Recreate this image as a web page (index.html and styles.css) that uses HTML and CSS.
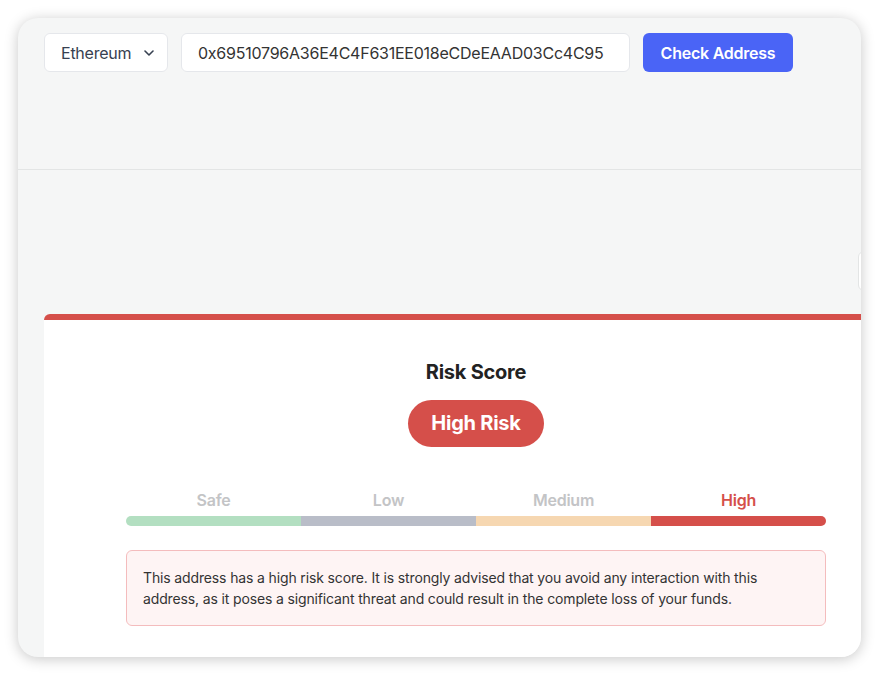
FILE: index.html
```html
<!DOCTYPE html>
<html lang="en">
<head>
    <meta charset="UTF-8">
    <meta name="viewport" content="width=device-width, initial-scale=1.0">
    <title>Address Risk Check</title>
    <link rel="stylesheet" href="styles.css">
</head>
<body>

    <div class="window">
        <div class="search-bar">
            <div class="select">
                <span>Ethereum</span>
                <svg class="chevron" width="10" height="6" viewBox="0 0 10 6">
                    <path d="M1 1l4 4 4-4" fill="none" stroke="#374151" stroke-width="1.6" stroke-linecap="round" stroke-linejoin="round"/>
                </svg>
            </div>
            <input class="address" type="text" value="0x69510796A36E4C4F631EE018eCDeEAAD03Cc4C95">
            <button class="check-btn">Check Address</button>
        </div>

        <div class="side-tab"></div>

        <div class="result">
            <div class="card">
                <h2 class="card-title">Risk Score</h2>
                <span class="pill">High Risk</span>

                <div class="scale">
                    <div class="scale-labels">
                        <span>Safe</span>
                        <span>Low</span>
                        <span>Medium</span>
                        <span class="active">High</span>
                    </div>
                    <div class="scale-bar">
                        <span class="seg safe"></span>
                        <span class="seg low"></span>
                        <span class="seg medium"></span>
                        <span class="seg high"></span>
                    </div>
                </div>

                <div class="alert">
                    This address has a high risk score. It is strongly advised that you avoid any interaction with this
                    address, as it poses a significant threat and could result in the complete loss of your funds.
                </div>
            </div>
        </div>
    </div>

</body>
</html>
```

FILE: styles.css
```css
body {
    margin: 0;
    padding: 0;
    background-color: #fff;
    font-family: Inter, "Noto Sans", sans-serif;
    letter-spacing: -0.015em;
}

/* Janela */
.window {
    position: relative;
    margin: 18px;
    width: 843px;
    height: 639px;
    border-radius: 20px;
    overflow: hidden;
    background-color: #f5f6f6;
    box-shadow: 0 2px 14px rgba(0, 0, 0, 0.22);
}

/* Barra de busca */
.search-bar {
    display: flex;
    align-items: flex-start;
    gap: 13px;
    height: 136px;
    padding: 15px 26px 0;
    border-bottom: 1px solid #e3e5e5;
}

.select {
    display: flex;
    align-items: center;
    justify-content: space-between;
    box-sizing: border-box;
    width: 124px;
    height: 39px;
    padding: 0 13px 0 16px;
    background-color: #fff;
    border: 1px solid #e5e7eb;
    border-radius: 6px;
    font-size: 16px;
    color: #374151;
}

.address {
    box-sizing: border-box;
    width: 449px;
    height: 39px;
    padding: 0 16px;
    background-color: #fff;
    border: 1px solid #e5e7eb;
    border-radius: 6px;
    font-family: inherit;
    font-size: 16px;
    letter-spacing: inherit;
    color: #333;
    outline: none;
}

.check-btn {
    height: 39px;
    width: 150px;
    padding: 0;
    background-color: #4a64f6;
    color: #fff;
    border: none;
    border-radius: 6px;
    font-family: inherit;
    font-size: 16px;
    font-weight: 600;
    letter-spacing: inherit;
    cursor: pointer;
}

.side-tab {
    position: absolute;
    top: 233px;
    left: 840px;
    width: 40px;
    height: 38px;
    background-color: #fff;
    border: 1px solid #e3e5e5;
    border-radius: 6px;
}

/* Resultado */
.result {
    padding: 144px 0 0 26px;
}

.card {
    display: flex;
    flex-direction: column;
    align-items: center;
    width: 864px;
    padding: 38px 82px 40px;
    box-sizing: border-box;
    background-color: #fff;
    border-top: 6px solid #d54f4a;
    border-radius: 6px 6px 0 0;
}

.card-title {
    margin: 0;
    font-size: 20px;
    line-height: 28px;
    font-weight: 700;
    color: #222;
}

.pill {
    margin-top: 14px;
    height: 47px;
    line-height: 47px;
    padding: 0 23px;
    border-radius: 24px;
    background-color: #d54f4a;
    color: #fff;
    font-size: 20px;
    font-weight: 700;
}

.scale {
    width: 100%;
    margin-top: 43px;
}

.scale-labels {
    display: flex;
}

.scale-labels span {
    flex: 1;
    text-align: center;
    font-size: 16px;
    line-height: 20px;
    font-weight: 600;
    color: #c3c4c6;
}

.scale-labels .active {
    color: #d54f4a;
}

.scale-bar {
    display: flex;
    height: 10px;
    margin-top: 6px;
    border-radius: 5px;
    overflow: hidden;
}

.seg {
    flex: 1;
}

.safe { background-color: #b3dfc1; }
.low { background-color: #b9bdc8; }
.medium { background-color: #f6d7b1; }
.high { background-color: #d54f4a; }

.alert {
    box-sizing: border-box;
    width: 100%;
    margin-top: 24px;
    padding: 16px 40px 16px 16px;
    background-color: #fef4f4;
    border: 1px solid #f4bcbd;
    border-radius: 6px;
    font-size: 14px;
    line-height: 21px;
    letter-spacing: -0.01em;
    color: #333;
}
```
